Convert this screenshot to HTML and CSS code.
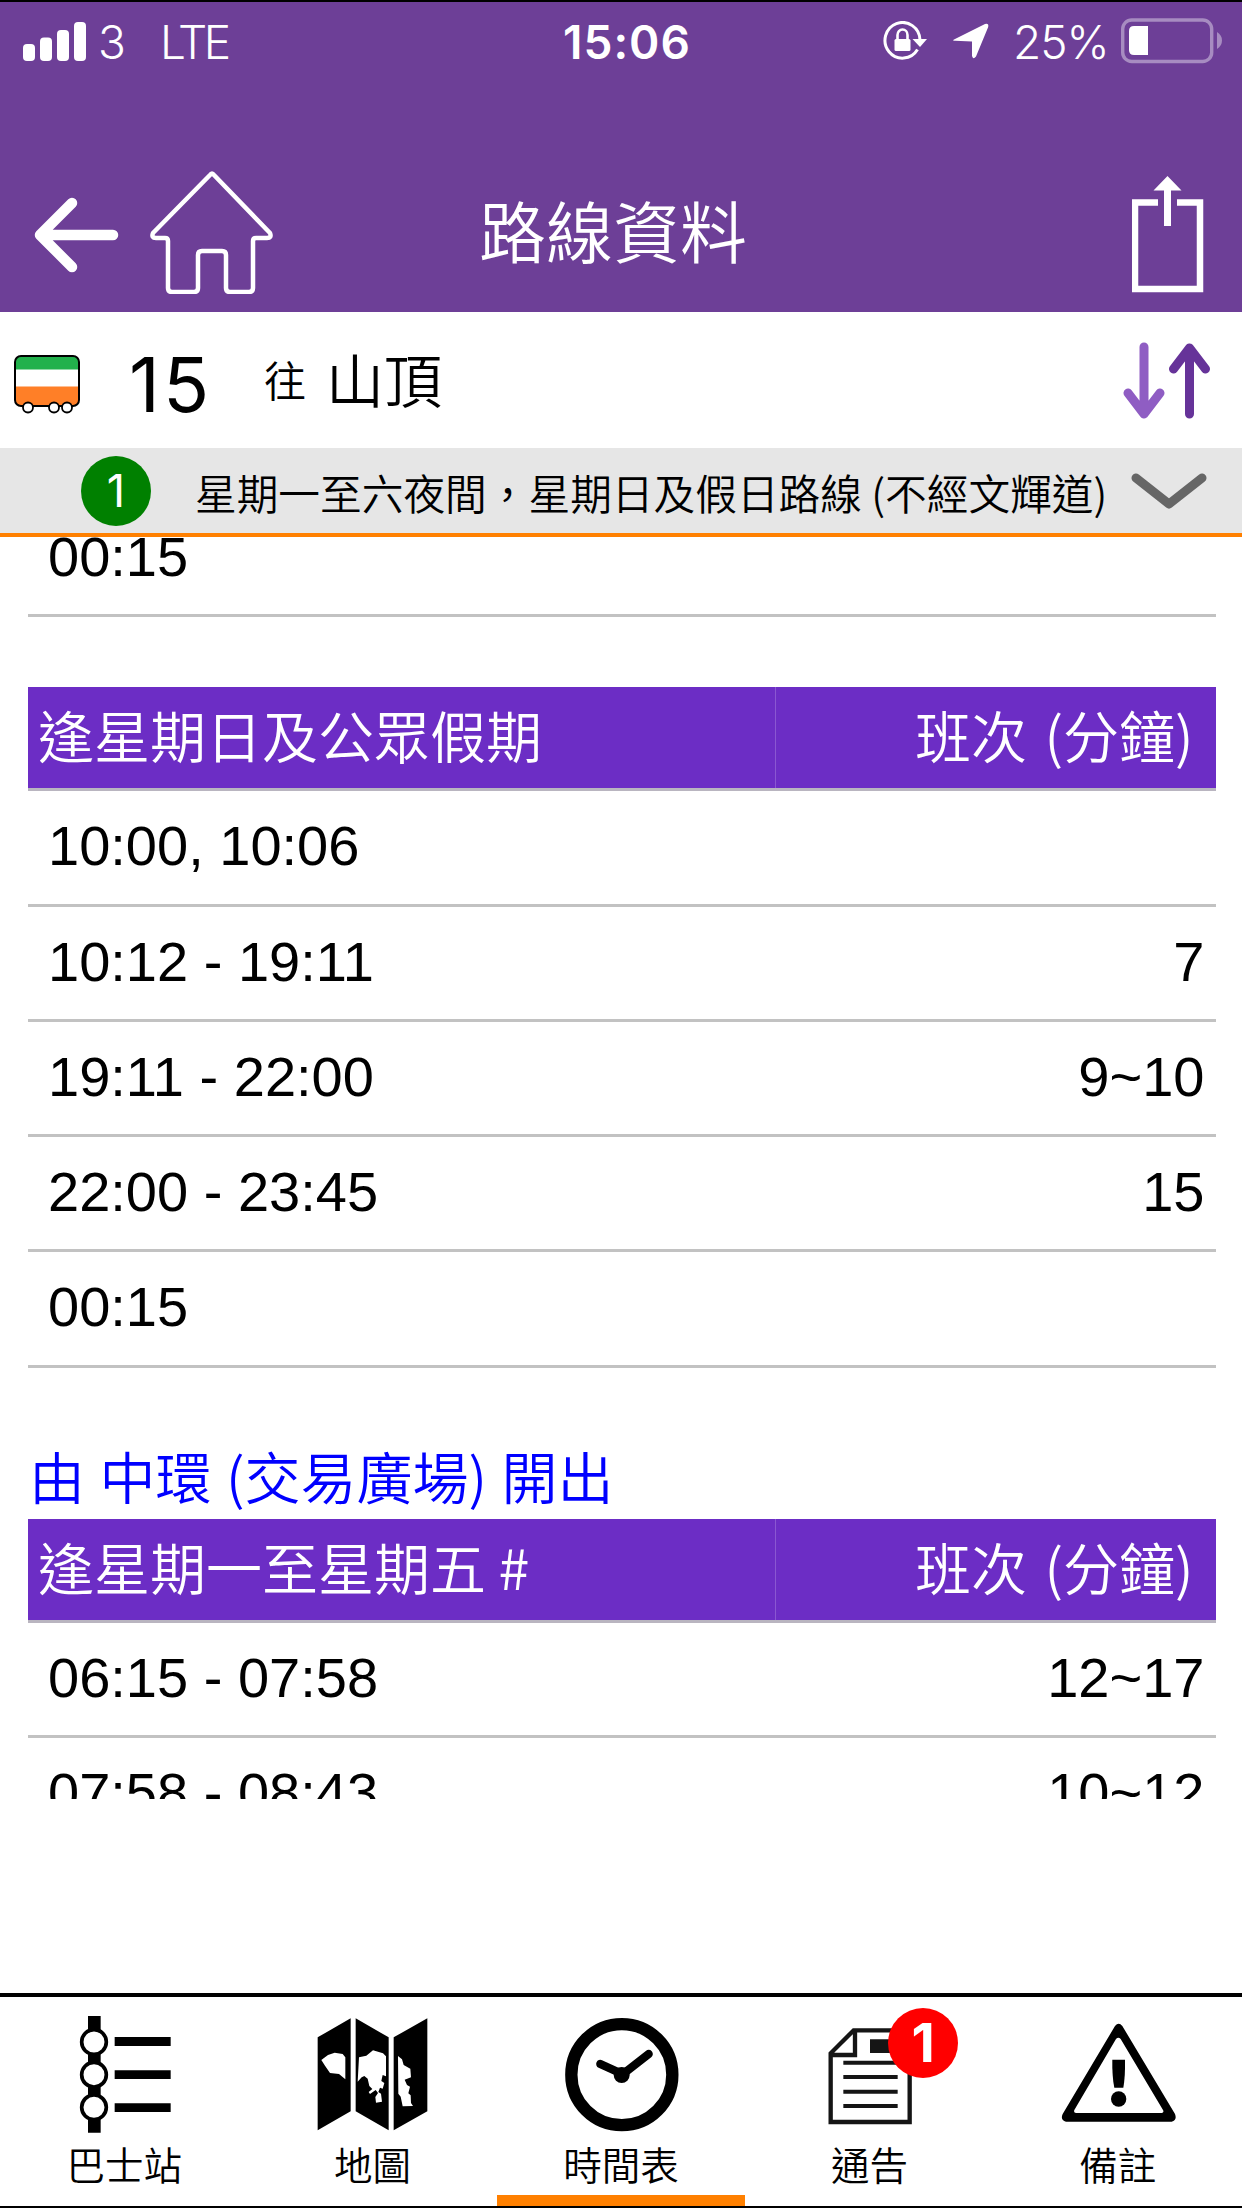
FILE: index.html
```html
<!DOCTYPE html>
<html lang="zh-Hant-HK">
<head>
<meta charset="utf-8">
<title>路線資料</title>
<link rel="stylesheet" href="styles.css">
</head>
<body>
<div class="app">
  <header class="header">
    <div class="status">
      <svg class="signal" width="63" height="40" viewBox="0 0 63 40" fill="#fff"><rect y="22" width="12" height="17" rx="4"/><rect x="17" y="15.500" width="12" height="23.500" rx="4"/><rect x="34" y="8" width="12" height="31" rx="4"/><rect x="51" width="12" height="39" rx="4"/></svg>
      <span class="carrier">3</span>
      <span class="network">LTE</span>
      <span class="clock">15:06</span>
      <svg class="lock" width="44" height="40" viewBox="0 0 44 40"><path d="M34.500 28.500A17.500 17.800 0 1 1 37 19" fill="none" stroke="#fff" stroke-width="3"/><path d="M29.500 18h14.500L37 26z" fill="#fff"/><rect x="11.500" y="18" width="16" height="12" rx="1.500" fill="#fff"/><path d="M14.500 19v-5a5 5.500 0 0 1 10 0v5" fill="none" stroke="#fff" stroke-width="2.600"/></svg>
      <svg class="location" width="38" height="38" viewBox="0 0 38 38"><path d="M2 17.500 33 2q4-1 3.200 3L24 34.500q-3 3.500-4-.5V19.500L3 18.800Q0 18.800 2 17.500z" fill="#fff"/></svg>
      <span class="percent">25%</span>
      <svg class="battery" width="102" height="46" viewBox="0 0 102 46"><rect x="1.700" y="2" width="89" height="41.500" rx="9" fill="none" stroke="#a78cc1" stroke-width="3.400"/><path d="M13 8h14v29H13q-5 0-5-5V13q0-5 5-5z" fill="#fff"/><path d="M96 14q5 3 5 8.500T96 31z" fill="#a78cc1"/></svg>
    </div>
    <nav class="nav">
      <svg class="back" width="90" height="80" viewBox="0 0 90 80" fill="none" stroke="#fff" stroke-width="10.500" stroke-linecap="round" stroke-linejoin="round"><path d="M42 8 10 40 42 72M12 40H83"/></svg>
      <svg class="home" width="124" height="124" viewBox="0 0 124 124" fill="none" stroke="#fff" stroke-width="4.500" stroke-linejoin="round"><path d="M60 5q2-3 4 0l56 58q2 5-3 5h-11q-3 0-3 3v47q0 4-4 4H80q-4 0-4-4V85q0-4-4-4H52q-4 0-4 4v33q0 4-4 4H22q-4 0-4-4V71q0-3-3-3H6q-5 0-3-5z"/></svg>
      <h1 class="title">路線資料</h1>
      <svg class="share" width="72" height="117" viewBox="0 0 72 117"><path d="M26 26.500H3v86.500h65V26.500H45" fill="none" stroke="#fff" stroke-width="6.500"/><path d="M35.500 0 49.500 14.500H39V50h-7V14.500H21.500z" fill="#fff"/></svg>
    </nav>
  </header>

  <section class="route">
    <svg class="bus" width="68" height="60" viewBox="0 0 68 60"><clipPath id="body"><rect x="1" y="1" width="64" height="50" rx="6"/></clipPath><g clip-path="url(#body)"><path fill="#fff" d="M0 0h68v52H0z"/><path fill="#22b14c" d="M0 0h68v14.500H0z"/><path fill="#ff7f27" d="M0 31.500h68V52H0z"/></g><rect x="1" y="1" width="64" height="50" rx="6" fill="none" stroke="#000" stroke-width="2"/><g fill="#fff" stroke="#000" stroke-width="1.800"><circle cx="14" cy="52.500" r="5"/><circle cx="40" cy="52.500" r="5"/><circle cx="53" cy="52.500" r="5"/></g></svg>
    <span class="number">15</span>
    <span class="to">往</span>
    <span class="dest">山頂</span>
    <svg class="swap" width="88" height="78" viewBox="0 0 88 78" fill="none" stroke-width="9" stroke-linecap="round" stroke-linejoin="round"><path stroke="#8f5dc3" d="M21 5v66M5 51l16 21 16-21"/><path stroke="#663399" d="M66.500 72V6M50.500 27l16-21 16 21"/></svg>
  </section>

  <section class="variant">
    <span class="dot">1</span>
    <span class="variant-name">星期一至六夜間，星期日及假日路線 (不經文輝道)</span>
    <svg class="chevron" width="78" height="38" viewBox="0 0 78 38" fill="none" stroke="#666" stroke-width="9" stroke-linecap="round" stroke-linejoin="round"><path d="M6 6 39 32 72 6"/></svg>
  </section>

  <main class="schedule">
    <div class="row first"><span>00:15</span></div>
    <div class="group">
      <div class="head"><span class="days">逢星期日及公眾假期</span><span class="freq">班次 (分鐘)</span></div>
      <div class="row"><span>10:00, 10:06</span></div>
      <div class="row"><span>10:12 - 19:11</span><span>7</span></div>
      <div class="row"><span>19:11 - 22:00</span><span>9~10</span></div>
      <div class="row"><span>22:00 - 23:45</span><span>15</span></div>
      <div class="row"><span>00:15</span></div>
    </div>
    <h2 class="origin">由 中環 (交易廣場) 開出</h2>
    <div class="group second">
      <div class="head"><span class="days">逢星期一至星期五 #</span><span class="freq">班次 (分鐘)</span></div>
      <div class="row"><span>06:15 - 07:58</span><span>12~17</span></div>
      <div class="row"><span>07:58 - 08:43</span><span>10~12</span></div>
    </div>
  </main>

  <footer class="tabs">
    <div class="tab">
      <svg width="120" height="120" viewBox="192 102 360 360"><path d="M264 108h38v350h-38z"/><g fill="#fff" stroke="#000" stroke-width="11"><circle cx="282" cy="186" r="37"/><circle cx="282" cy="284" r="37"/><circle cx="282" cy="382" r="37"/></g><path d="M344 171h168v27H344zM344 271h168v26H344zM344 370h168v26H344z"/></svg>
      <span>巴士站</span>
    </div>
    <div class="tab">
      <svg width="120" height="120" viewBox="938 102 360 360"><path d="M952 172 1051 115V394L952 451zM1066 115l99 57v279l-99-57zM1180 172l101-57v279l-101 57z"/><path fill="#fff" d="M963 240l20-15 20-7 24 4 8 10v66l-19-16-27-3-15-22zM1076 232l22-5 20-16 30 9 9 9v60l-10-4-4 18 9 6-5 17-8-3 -5 13 8 5 3 24-18 3-2-17 8-12-7-9-17 12-4-6 11-9-9-9-5-22-10-8-8 4-12 13zM1193 228l12 10 5 17 20 11 2 26-19 7 7 16 9 5-5 20 7 6 1 23 6 9-31 1-6-29-7-9z"/></svg>
      <span>地圖</span>
    </div>
    <div class="tab active">
      <svg width="120" height="120" viewBox="363 102 360 360"><circle cx="545.500" cy="284" r="151.500" fill="none" stroke="#000" stroke-width="37"/><path d="M481 252l66 30M626 222l-72 56" fill="none" stroke="#000" stroke-width="25" stroke-linecap="round"/><circle cx="545" cy="285" r="24"/></svg>
      <span>時間表</span>
    </div>
    <div class="tab">
      <svg width="120" height="120" viewBox="28 102 360 360"><path d="M162 151H330V426H93V220zM166 151v74H93" fill="none" stroke="#151515" stroke-width="13"/><path fill="#151515" d="M211 178h95v41h-95zM131 242h163v12H131zM131 285h163v12H131zM131 329h163v12H131zM131 372h163v12H131z"/></svg>
      <span>通告</span>
      <b class="badge">1</b>
    </div>
    <div class="tab">
      <svg width="120" height="120" viewBox="773 102 360 360"><path fill-rule="evenodd" d="M944 138q11-14 22 0L1124 402q7 18-10 23H797q-18-5-10-23zM947 177 822 390q-3 8 5 9h257q8-1 4-9L961 177q-7-8-14 0z"/><path d="M936 239h38q1 50-5 84h-27q-7-34-6-84z"/><circle cx="955" cy="357" r="23"/></svg>
      <span>備註</span>
    </div>
  </footer>
</div>
</body>
</html>
```

FILE: styles.css
```css
* { box-sizing: border-box; }

body {
  margin: 0;
  background: #fff;
  color: #000;
  font-family: "Noto Sans CJK TC", sans-serif;
  font-weight: 350;
}

svg { display: block; flex: none; }
span, h1, h2, b { white-space: nowrap; flex: none; }
h1, h2 { margin: 0; font-weight: 350; }

.app {
  display: flex;
  flex-direction: column;
  width: 1242px;
  height: 2208px;
  overflow: hidden;
  border-top: 2px solid #000;
  border-bottom: 2px solid #000;
}

.header {
  height: 310px;
  flex: none;
  background: #6d3f97;
  color: #fff;
}

.status {
  display: flex;
  align-items: center;
  height: 78px;
  padding-left: 23px;
  font: 350 46px/78px Inter, sans-serif;
}
.signal { margin-bottom: -1px; }
.carrier { width: 63px; padding-left: 12px; }
.network { width: 402px; padding-left: 11px; letter-spacing: -3.500px; }
.carrier, .network, .clock, .percent { margin-top: 2px; }
.clock { width: 333px; padding-left: 12px; font-weight: 600; letter-spacing: 1px; }
.lock { margin-left: -1px; }
.location { margin-left: 25px; }
.percent { width: 108px; margin-left: 23px; letter-spacing: -1px; }

.nav {
  display: flex;
  align-items: center;
  padding: 90px 0 0 30px;
}
.back { margin-top: 5px; }
.home { margin-left: 30px; }
.title { margin-left: 205px; font-size: 67px; line-height: 124px; margin-top: -6px; }
.share { margin-left: 385px; margin-top: 5px; }

.route {
  display: flex;
  align-items: center;
  height: 136px;
  flex: none;
  padding-left: 14px;
}
.bus { margin-top: 9px; }
.number { width: 182px; padding-left: 47px; font: 400 76px/136px Inter, sans-serif; letter-spacing: 3px; margin-top: 8px; }
.to { width: 62px; font-size: 42px; margin-top: -3px; }
.dest { width: 797px; font-size: 58px; margin-top: -4px; }
.swap { margin-bottom: -1px; }

.variant {
  display: flex;
  align-items: center;
  height: 89px;
  flex: none;
  padding-left: 81px;
  background: #e6e6e6;
  border-bottom: 4px solid #ff8000;
}
.dot {
  width: 70px;
  height: 70px;
  border-radius: 50%;
  background: #008000;
  color: #fff;
  text-align: center;
  font: 400 45px/70px Inter, sans-serif;
}
.variant-name { width: 935px; margin-left: 44px; margin-top: 2px; font-size: 41.7px; line-height: 80px; }

.schedule {
  height: 1261.500px;
  flex: none;
  padding: 0 26.500px 0 28px;
  overflow: hidden;
}

.row {
  display: flex;
  justify-content: space-between;
  height: 115.250px;
  padding: 0 11px 0 20px;
  border-bottom: 3px solid #c2c2c2;
  font: 56px/110px "Liberation Sans", sans-serif;
}
.row.first { margin-top: -35.500px; }

.group { margin-top: 70px; }
.head {
  display: grid;
  grid-template-columns: 748px 1fr;
  height: 104.500px;
  border-bottom: 3px solid #b9b5c0;
  background: #6c2dc5;
  color: #fff;
  font-size: 56px;
  line-height: 94px;
}
.days { padding-left: 10px; border-right: 1px solid #8a57d1; }
.freq { padding-right: 22px; text-align: right; word-spacing: 5px; }

.origin {
  margin-top: 68px;
  padding-left: 1px;
  color: #00f;
  font-size: 56px;
  line-height: 78px;
  word-spacing: 2px;
}
.group.second { margin-top: 5px; }

.tabs {
  display: flex;
  margin-top: auto;
  height: 213px;
  flex: none;
  border-top: 4px solid #000;
}
.tab {
  position: relative;
  flex: 1;
  display: flex;
  flex-direction: column;
  align-items: center;
  padding-top: 17px;
  font-size: 38.500px;
  line-height: 58px;
}
.tab.active { border-bottom: 11px solid #ff8000; }
.badge {
  position: absolute;
  left: 143px;
  top: 11px;
  width: 70px;
  height: 70px;
  border-radius: 50%;
  background: #f00;
  color: #fff;
  text-align: center;
  font: 700 54px/70px Inter, sans-serif;
}
```
